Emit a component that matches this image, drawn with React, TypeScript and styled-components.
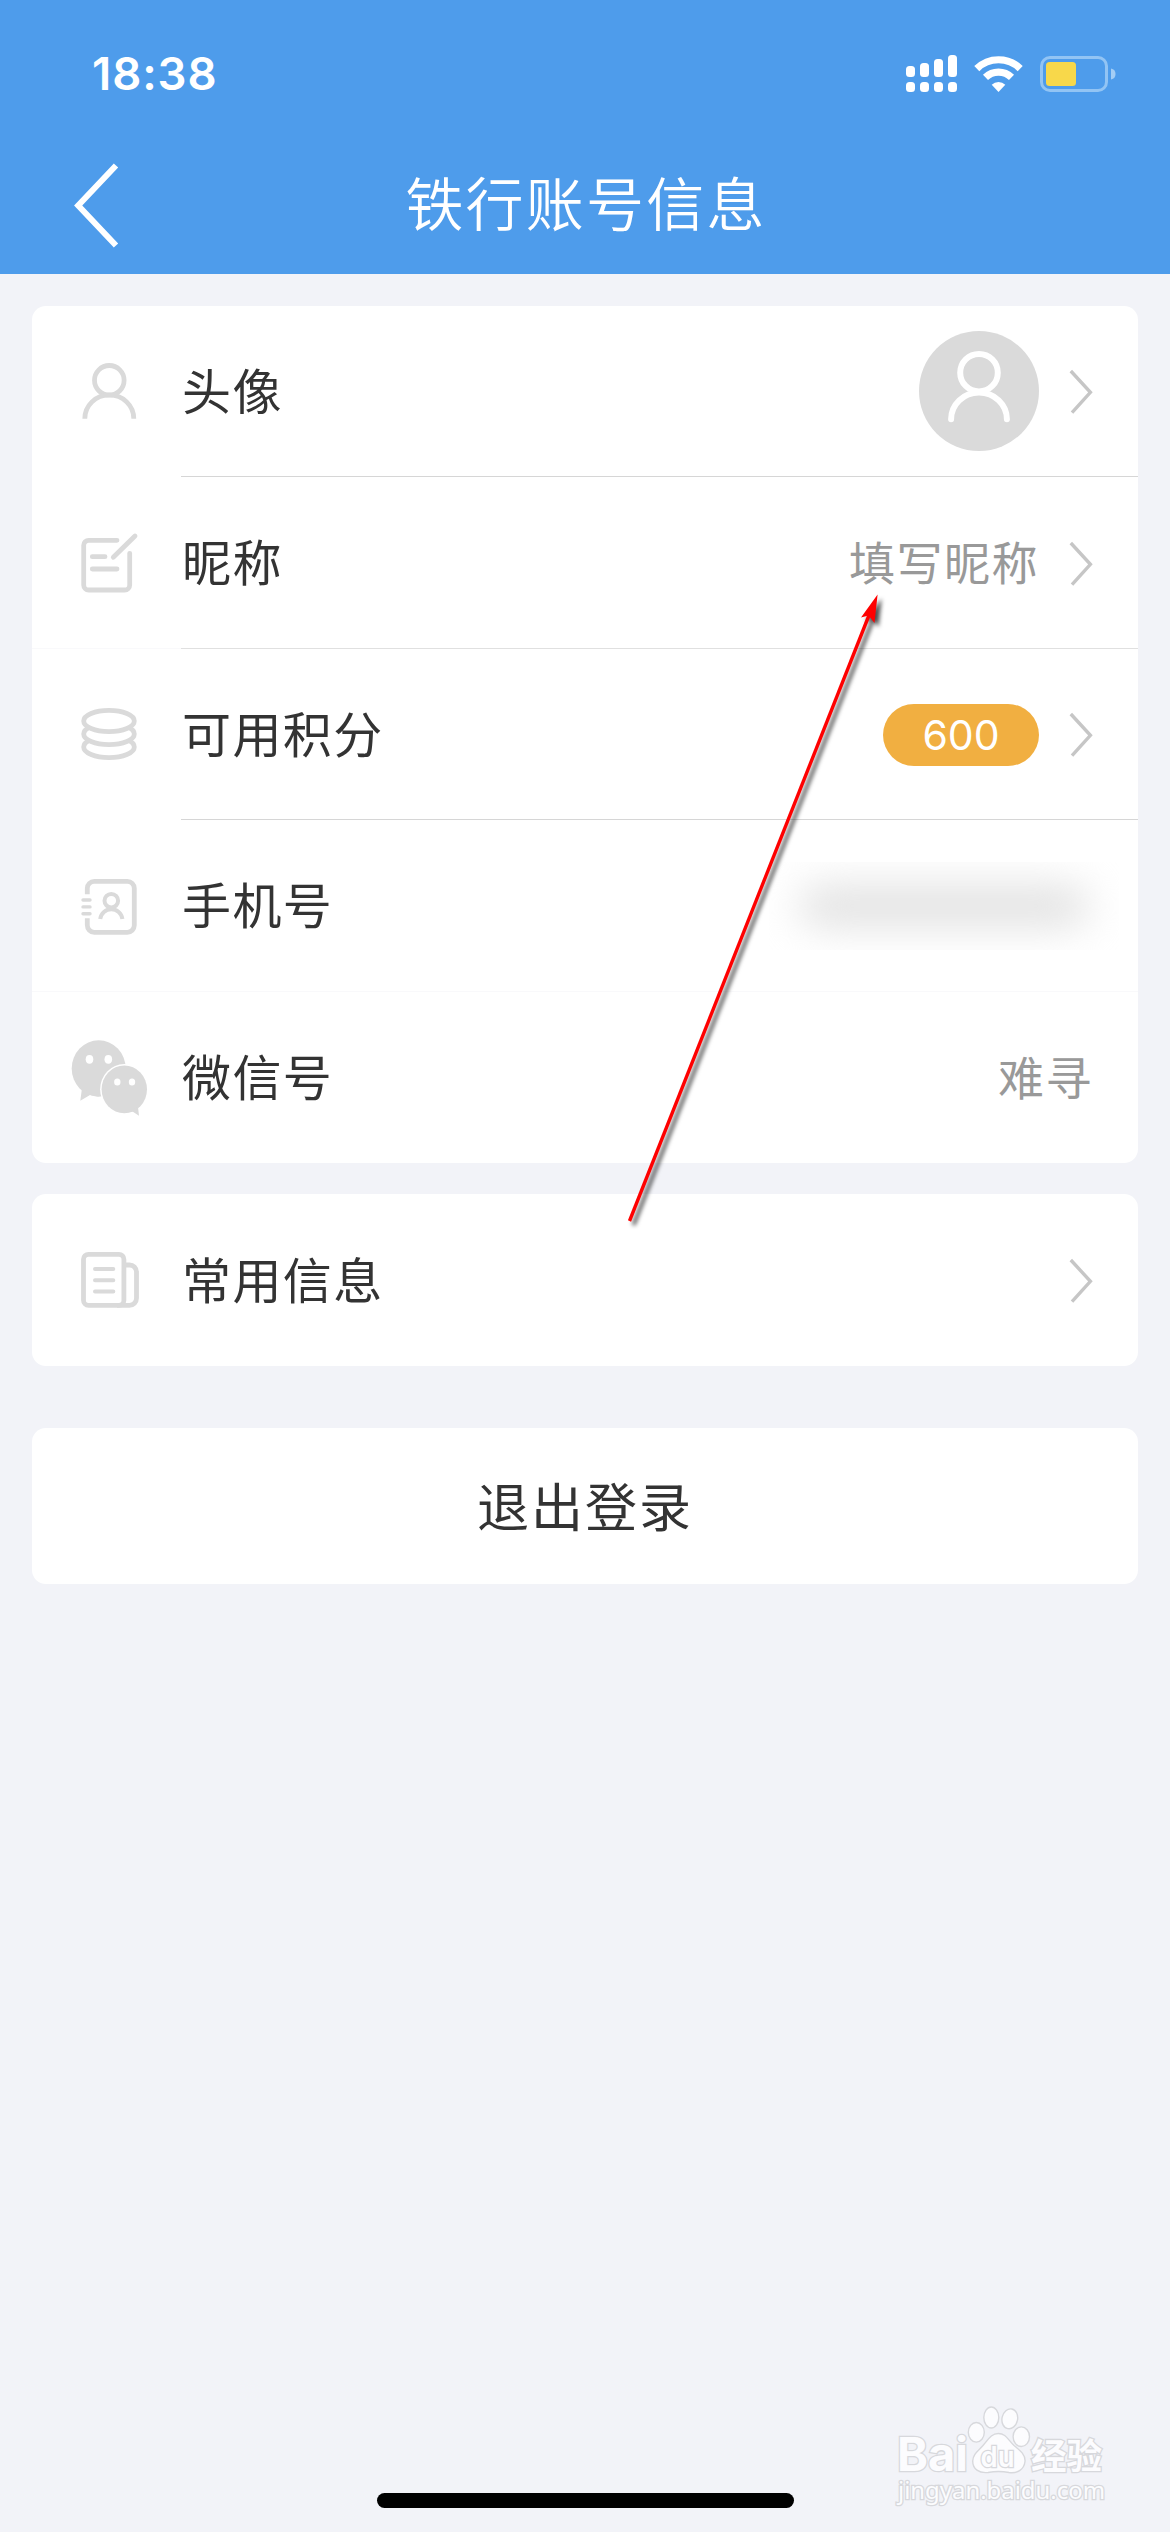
import React from "react";
import styled, { createGlobalStyle } from "styled-components";

const GlobalStyle = createGlobalStyle`
  *, *::before, *::after { box-sizing: border-box; }
  body { margin: 0; background: #f2f3f8; }
`;

const Screen = styled.div`
  position: relative;
  display: flex;
  flex-direction: column;
  width: 1170px;
  height: 2532px;
  overflow: hidden;
  background: #f2f3f8;
  color: #333;
  font-family: "Noto Sans CJK SC", sans-serif;
`;

const Header = styled.header`
  height: 274px;
  background: #4e9ceb;
  color: #fff;
`;

const StatusBar = styled.div`
  display: flex;
  align-items: center;
  justify-content: space-between;
  height: 148px;
  padding: 0 54px 0 92px;
`;

const Clock = styled.span`
  font: 600 45.5px/1 Inter, sans-serif;
  letter-spacing: 0.9px;
`;

const StatusIcons = styled.div`
  display: flex;
  align-items: center;
  gap: 17px;
`;

const NavBar = styled.div`
  display: grid;
  grid-template-columns: 120px 1fr 120px;
  align-items: center;
  height: 115px;
`;

const BackButton = styled.button`
  display: flex;
  justify-content: flex-end;
  padding: 0;
  border: 0;
  background: none;
`;

const Title = styled.h1`
  margin: 0;
  padding: 0 0 10px 2px;
  text-align: center;
  font-size: 58px;
  font-weight: 350;
  line-height: 84px;
  letter-spacing: 2.2px;
`;

const Content = styled.main`
  display: flex;
  flex: 1;
  flex-direction: column;
  padding: 32px 32px 0;
`;

const Card = styled.section<{ $gap?: number }>`
  display: flex;
  flex-direction: column;
  margin-top: ${(p) => p.$gap ?? 0}px;
  overflow: hidden;
  border-radius: 14px;
  background: #fff;
`;

const Row = styled.div<{ $height: number }>`
  display: flex;
  height: ${(p) => p.$height}px;
`;

type LineProps = { $line?: string };

const IconSlot = styled.div<LineProps>`
  display: flex;
  align-items: center;
  width: 149px;
  padding-left: 37px;
  border-bottom: ${(p) => (p.$line ? `1px solid ${p.$line}` : "0")};
`;

const RowBody = styled.div<LineProps>`
  display: flex;
  flex: 1;
  align-items: center;
  justify-content: space-between;
  padding: 0 45px 0 1px;
  border-bottom: ${(p) => (p.$line ? `1px solid ${p.$line}` : "0")};
`;

const Label = styled.span`
  padding-bottom: 5px;
  font-size: 49px;
  line-height: 72px;
  letter-spacing: 1.4px;
`;

const Trailing = styled.div`
  display: flex;
  align-items: center;
  gap: 30px;
`;

const Value = styled.span`
  padding-bottom: 6px;
  color: #999;
  font-size: 46px;
  line-height: 68px;
  letter-spacing: 1.5px;
`;

const Badge = styled.span`
  display: flex;
  align-items: center;
  justify-content: center;
  width: 156px;
  height: 62px;
  margin-top: 2px;
  border-radius: 31px;
  background: #f1af41;
  color: #fff;
  font: 400 41px/1 Inter, sans-serif;
  letter-spacing: 0;
`;

const HiddenNumber = styled.div`
  display: flex;
  align-items: center;
  justify-content: center;
  width: 350px;
  height: 88px;
  margin-right: -26px;
  overflow: hidden;
`;

const Smudge = styled.div`
  width: 290px;
  height: 40px;
  border-radius: 20px;
  background: #e0e0e0;
  filter: blur(20px);
`;

const LogoutButton = styled.button`
  height: 156px;
  margin-top: 62px;
  padding: 0 0 3px;
  border: 0;
  border-radius: 14px;
  background: #fff;
  color: #333;
  font-family: inherit;
  font-size: 52px;
  line-height: 76px;
  letter-spacing: 2px;
`;

const HomeIndicator = styled.div`
  align-self: center;
  width: 417px;
  height: 15px;
  margin: 0 0 24px 1px;
  border-radius: 8px;
  background: #000;
`;

const ArrowOverlay = styled.svg`
  position: absolute;
  left: 600px;
  top: 580px;
  pointer-events: none;
  filter: drop-shadow(4px 4px 2px rgba(0, 0, 0, 0.7));
`;

const Watermark = styled.svg`
  position: absolute;
  left: 890px;
  top: 2400px;
  fill: #fcfcfe;
  stroke: #d7d8dc;
  stroke-width: 1.4px;

  text {
    paint-order: stroke;
    stroke-width: 2.6px;
  }
`;

const LineIcon = styled.svg.attrs({ width: 80, height: 80, viewBox: "-40 -40 80 80" })`
  flex: none;
  fill: none;
  stroke: #dadada;
  stroke-width: 4.8px;
`;

const Signal = () => (
  <svg width="51" height="38" viewBox="0 0 51 38" fill="#fff">
    {[11, 8, 4, 0].map((top, i) => (
      <g key={top}>
        <rect x={i * 14} y={top} width="9" height={22 - top} rx="3.5" />
        <rect x={i * 14} y="27" width="9" height="10" rx="3.5" />
      </g>
    ))}
  </svg>
);

const Wifi = () => (
  <svg width="49" height="38" viewBox="0 0 49 38" fill="none" stroke="#fff">
    <path d="M2.8 13.6 A31 31 0 0 1 46.2 13.6" strokeWidth="7.2" />
    <path d="M11.5 22.4 A18.6 18.6 0 0 1 37.5 22.4" strokeWidth="7.2" />
    <path d="M24.5 37 L17.7 29.8 A9.8 9.8 0 0 1 31.3 29.8Z" fill="#fff" stroke="none" />
  </svg>
);

const Battery = () => (
  <svg width="76" height="36" viewBox="0 0 76 36">
    <rect x="1.5" y="1.5" width="65" height="33" rx="8.5" fill="none" stroke="#92c4f4" strokeWidth="3" />
    <rect x="6" y="6" width="30" height="24" rx="3.5" fill="#f8d84a" />
    <path d="M71 12.5 a5.6 5.6 0 0 1 0 11Z" fill="#a3cdf5" />
  </svg>
);

const BackIcon = () => (
  <svg width="46" height="86" viewBox="0 0 46 86" fill="none" stroke="#fff" strokeWidth="6">
    <path d="M42 2.5 L4.2 42.5 L42 82.5" />
  </svg>
);

const Chevron = () => (
  <svg width="24" height="46" viewBox="0 0 24 46" fill="none" stroke="#c6c6c6" strokeWidth="3.4">
    <path d="M1.8 3 L21.4 24.3 L3 44.6" />
  </svg>
);

const PersonIcon = () => (
  <LineIcon>
    <circle cx="0.3" cy="-10.7" r="14.8" />
    <path d="M-24.2 27.7 A24.5 23.8 0 0 1 24.8 27.7" />
  </LineIcon>
);

const NoteIcon = () => (
  <LineIcon strokeLinecap="round">
    <path d="M8 -22.7 H-20.3 a5 5 0 0 0 -5 5 V22 a5 5 0 0 0 5 5 H15.7 a5 5 0 0 0 5 -5 V-9.7" />
    <path d="M4.3 -5.7 L26 -27 M-16.7 -6.3 H-4 M-16.7 6 H8" />
  </LineIcon>
);

const CoinsIcon = () => (
  <LineIcon>
    {[13, 0, -13].map((cy) => (
      <ellipse key={cy} cx="0" cy={cy} rx="25.3" ry="10.7" fill="#fff" />
    ))}
  </LineIcon>
);

const ContactIcon = () => (
  <LineIcon>
    <path d="M-21.7 -11.7 V-17.7 a7 7 0 0 1 7 -7 H18.3 a7 7 0 0 1 7 7 V19.3 a7 7 0 0 1 -7 7 H-14.7 a7 7 0 0 1 -7 -7 V12.3" />
    <path d="M-26 -6 H-19 M-26 0.9 H-19 M-26 7.8 H-19" strokeLinecap="round" style={{ strokeWidth: 3.4 }} />
    <g style={{ strokeWidth: 4 }}>
      <circle cx="2.3" cy="-5.3" r="6.8" />
      <path d="M-8.8 13 A11.2 11.2 0 0 1 13.4 13" />
    </g>
  </LineIcon>
);

const WechatIcon = () => (
  <LineIcon>
    <g fill="#dadada" stroke="none">
      <ellipse cx="-10.3" cy="-9.5" rx="27" ry="28.2" />
      <path d="M-27 10 L-28.7 22.7 L-19 17 L-10 18.7Z" />
      <g fill="#fff">
        <ellipse cx="15.3" cy="11.3" rx="24.2" ry="25.2" />
        <ellipse cx="-19.5" cy="-18.7" rx="3.8" ry="4.4" />
        <ellipse cx="-0.7" cy="-18.7" rx="3.8" ry="4.4" />
      </g>
      <ellipse cx="15.3" cy="11.3" rx="22.7" ry="23.9" />
      <path d="M17 34.6 L23.5 33.5 L30 37.7 L29 29Z" />
      <g fill="#fff">
        <ellipse cx="8.3" cy="4" rx="3.2" ry="3.6" />
        <ellipse cx="23" cy="4" rx="3.2" ry="3.6" />
      </g>
    </g>
  </LineIcon>
);

const DocsIcon = () => (
  <LineIcon>
    <rect x="-25.5" y="-25.7" width="40.4" height="51" rx="5" />
    <path d="M15 -15 H20.5 a7 7 0 0 1 7 7 V18.3 a7 7 0 0 1 -7 7 H8" />
    <path d="M-14 -11 H4.3 M-14 0.2 H4.3 M-14 11.4 H4.3" strokeLinecap="round" style={{ strokeWidth: 4 }} />
  </LineIcon>
);

const Avatar = () => (
  <svg width="120" height="120" viewBox="0 0 120 120" fill="none" stroke="#fff" strokeWidth="6">
    <circle cx="60" cy="60" r="60" fill="#dadada" stroke="none" />
    <circle cx="60" cy="41.7" r="18.8" />
    <path d="M32.1 88.3 A27.9 26.8 0 0 1 87.9 88.3" strokeLinecap="round" />
  </svg>
);

type ItemProps = {
  icon: React.ReactNode;
  label: string;
  height: number;
  line?: string;
  slotLine?: string;
  arrow?: boolean;
  children?: React.ReactNode;
};

const Item = ({ icon, label, height, line, slotLine, arrow, children }: ItemProps) => (
  <Row $height={height}>
    <IconSlot $line={slotLine}>{icon}</IconSlot>
    <RowBody $line={line}>
      <Label>{label}</Label>
      <Trailing>
        {children}
        {arrow && <Chevron />}
      </Trailing>
    </RowBody>
  </Row>
);

export default function App() {
  return (
    <Screen>
      <GlobalStyle />
      <Header>
        <StatusBar>
          <Clock>18:38</Clock>
          <StatusIcons>
            <Signal />
            <Wifi />
            <Battery />
          </StatusIcons>
        </StatusBar>
        <NavBar>
          <BackButton aria-label="返回">
            <BackIcon />
          </BackButton>
          <Title>铁行账号信息</Title>
        </NavBar>
      </Header>

      <Content>
        <Card>
          <Item icon={<PersonIcon />} label="头像" height={171} line="#d6d6d6" slotLine="#fff" arrow>
            <Avatar />
          </Item>
          <Item icon={<NoteIcon />} label="昵称" height={172} line="#e0e0e0" slotLine="#f9f9fb" arrow>
            <Value>填写昵称</Value>
          </Item>
          <Item icon={<CoinsIcon />} label="可用积分" height={171} line="#d6d6d6" slotLine="#fff" arrow>
            <Badge>600</Badge>
          </Item>
          <Item icon={<ContactIcon />} label="手机号" height={172} line="#f9f9fb" slotLine="#f9f9fb">
            <HiddenNumber>
              <Smudge />
            </HiddenNumber>
          </Item>
          <Item icon={<WechatIcon />} label="微信号" height={171}>
            <Value>难寻</Value>
          </Item>
        </Card>
        <Card $gap={31}>
          <Item icon={<DocsIcon />} label="常用信息" height={172} arrow />
        </Card>
        <LogoutButton>退出登录</LogoutButton>
      </Content>

      <HomeIndicator />

      <ArrowOverlay width="300" height="660" viewBox="600 580 300 660">
        <path d="M629.5 1221 L869.5 614" stroke="#fe0000" strokeWidth="3.4" />
        <path d="M877.6 594.5 L874.5 623 L868.5 615.5 L861 617.5Z" fill="#fe0000" />
      </ArrowOverlay>

      <Watermark width="240" height="120" viewBox="0 0 240 120">
        <text x="7" y="71.3" fontFamily="Inter" fontWeight="700" fontSize="47" textLength="71" lengthAdjust="spacingAndGlyphs">
          Bai
        </text>
        <ellipse cx="86.3" cy="32.3" rx="8" ry="9.8" />
        <ellipse cx="101.3" cy="17.5" rx="7.5" ry="10.5" />
        <ellipse cx="119.8" cy="18.8" rx="7.8" ry="10" transform="rotate(12 119.8 18.8)" />
        <ellipse cx="131.3" cy="36.7" rx="8.2" ry="9.8" />
        <path d="M108.3 33.5 C116 33.5 118 40 124 45.5 C131 51 135.5 55 135 61.5 C134 70 127 73.5 119 72.5 C111 71 106 71 98 72.5 C89 73.5 82.7 69 82.7 61 C83 54 88 51 93 45.5 C98 40 101 33.5 108.3 33.5Z" />
        <text x="90.5" y="67.3" fontFamily="Inter" fontWeight="600" fontSize="29" textLength="34" lengthAdjust="spacingAndGlyphs">
          du
        </text>
        <text x="141" y="69" fontFamily="Noto Sans CJK SC" fontWeight="700" fontSize="35.5">
          经验
        </text>
        <text x="8" y="99" fontFamily="Noto Sans" fontSize="23" textLength="207" lengthAdjust="spacingAndGlyphs">
          jingyan.baidu.com
        </text>
      </Watermark>
    </Screen>
  );
}
